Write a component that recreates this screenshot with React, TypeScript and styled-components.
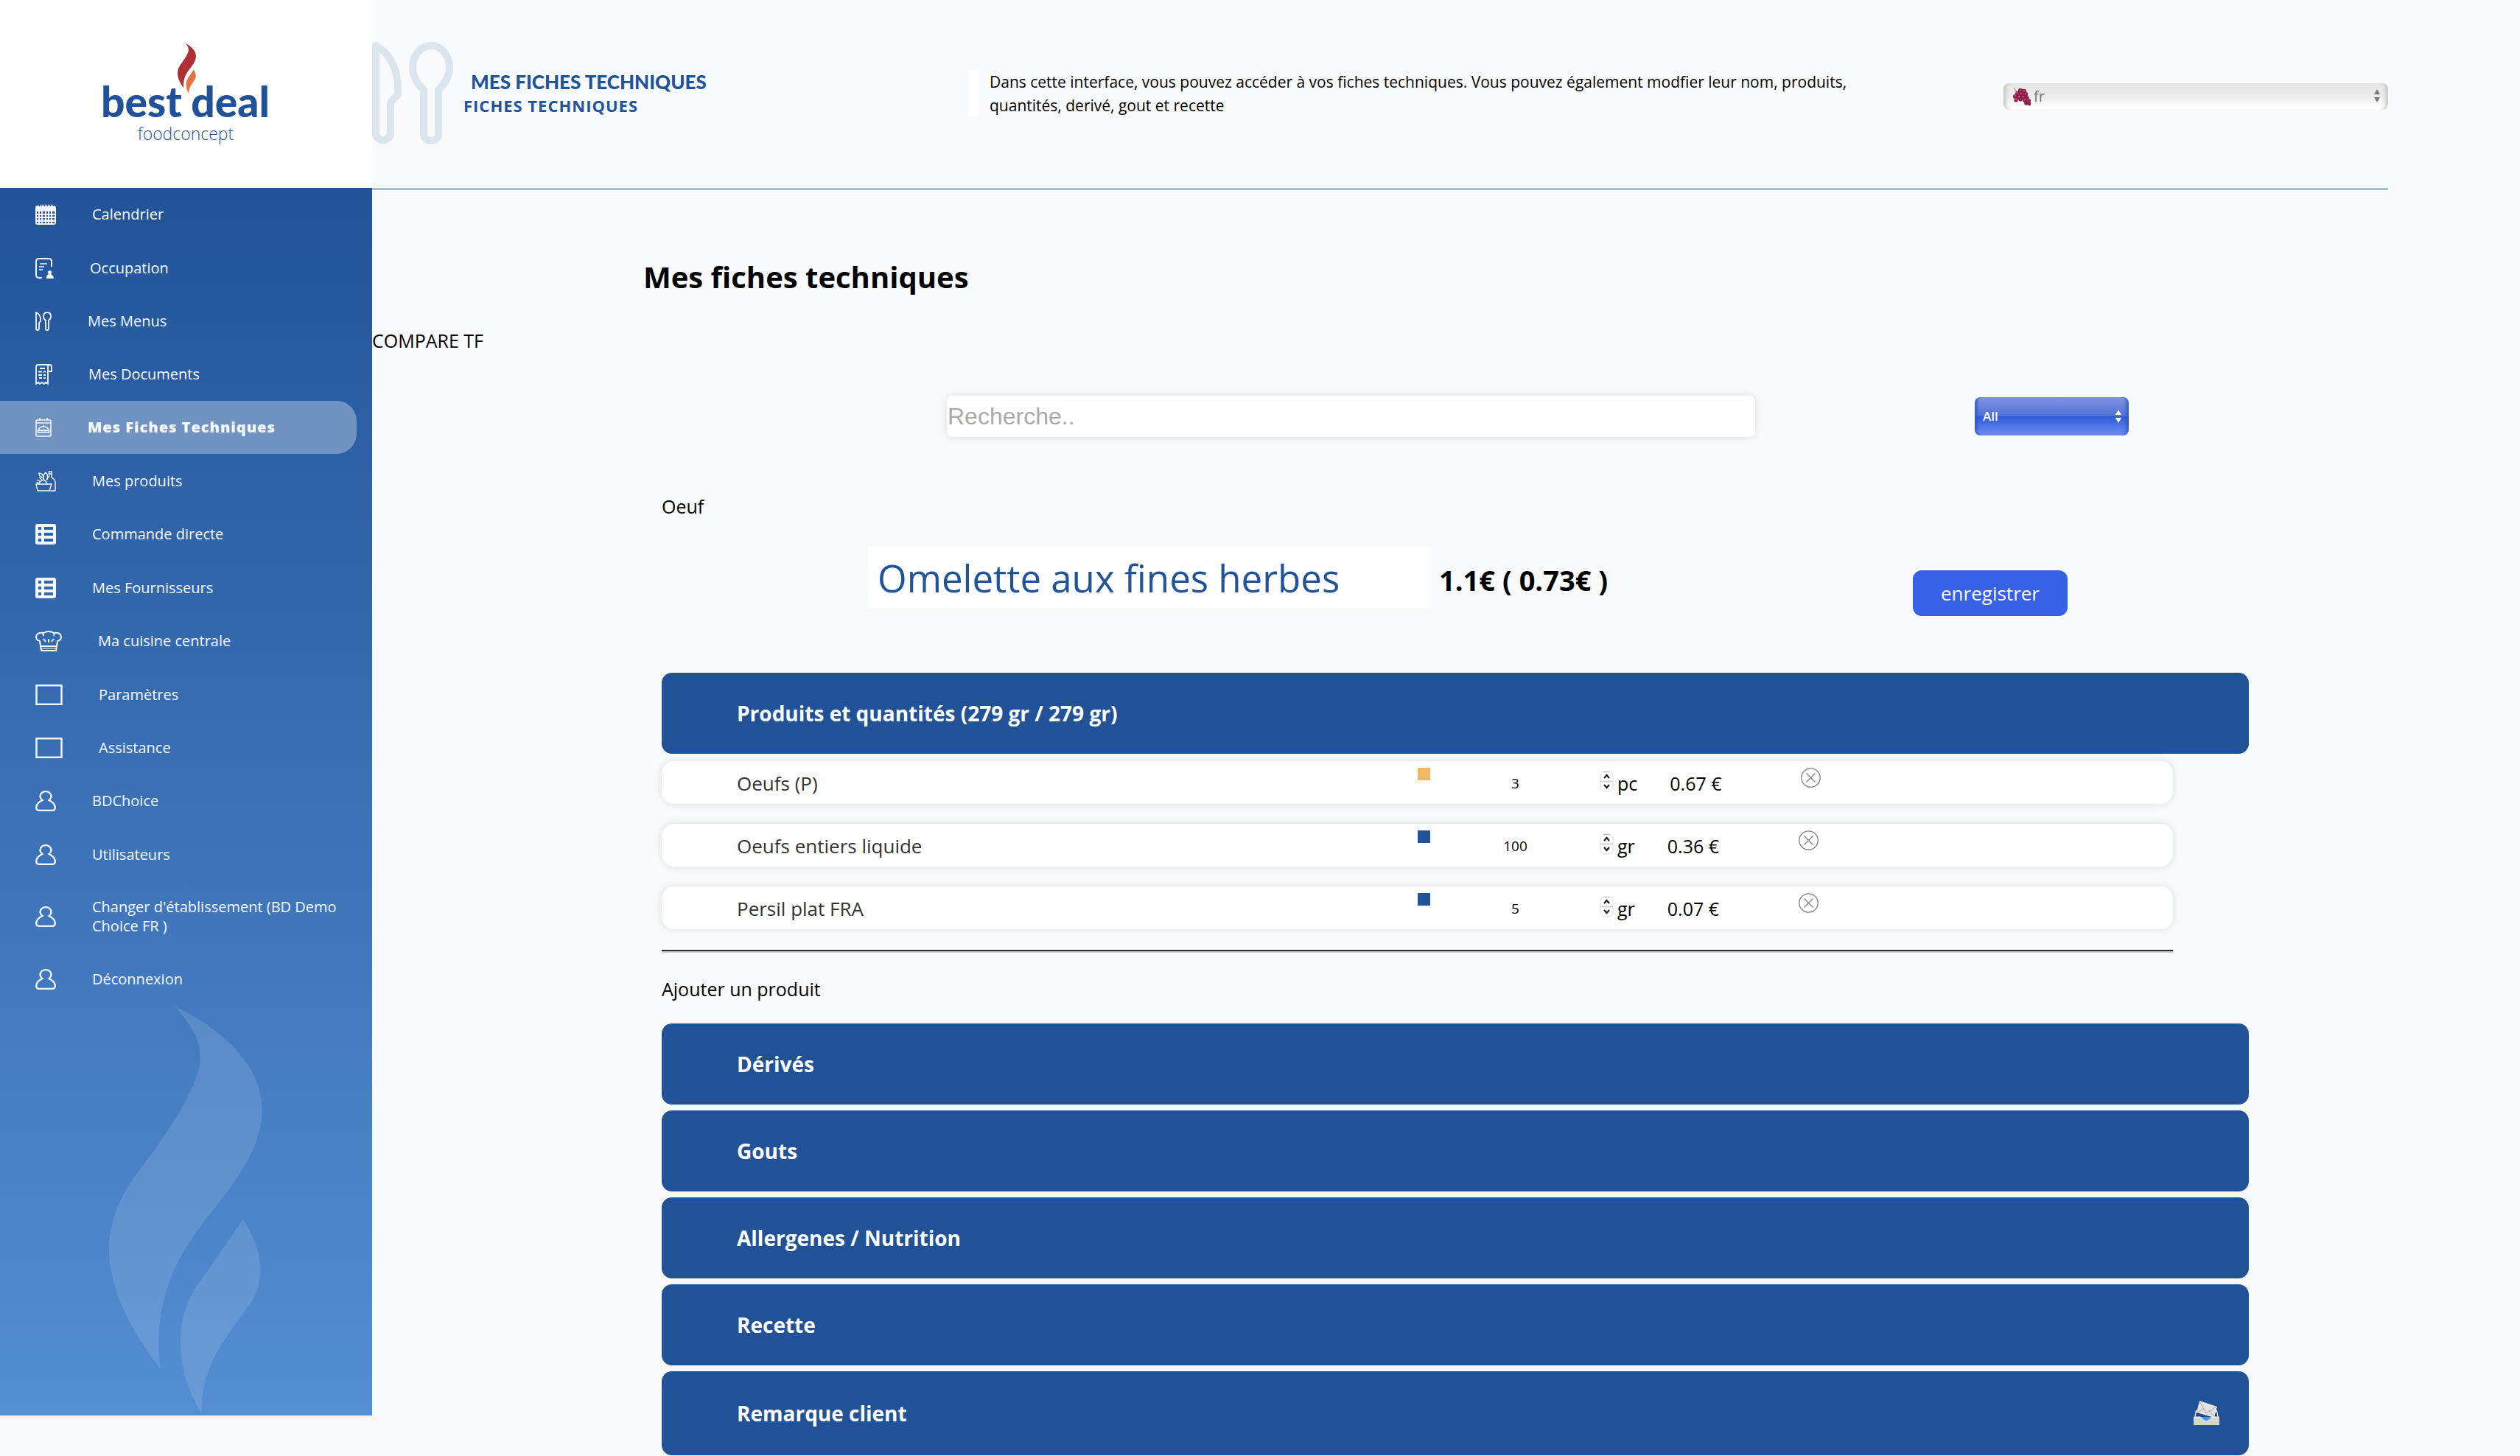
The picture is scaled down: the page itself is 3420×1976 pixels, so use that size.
import React from "react";
import styled, { createGlobalStyle } from "styled-components";

const blue = "#215297";
const bodyFont = `"Open Sans", "Noto Sans", sans-serif`;

const GlobalStyle = createGlobalStyle`
  *, *::before, *::after { box-sizing: border-box; }
  body { margin: 0; background: #f8fafc; color: #000; font-family: ${bodyFont}; font-size: 25px; line-height: 32px; font-weight: 400; }
  h1, h2, h3, p, ul { margin: 0; padding: 0; }
  ul { list-style: none; }
  button, input, select { font: inherit; }
  svg { display: block; flex: none; }
`;

const Page = styled.div`
  display: flex;
  align-items: flex-start;
  overflow: hidden;
`;

/* ---------- sidebar ---------- */

const Sidebar = styled.aside`
  flex: 0 0 505px;
`;

const Brand = styled.a`
  display: flex;
  justify-content: center;
  height: 255px;
  padding-top: 58px;
  background: #fff;
`;

const SideBody = styled.div`
  display: flex;
  flex-direction: column;
  padding-bottom: 2px;
  background: linear-gradient(180deg, #225399 0%, #548ed2 100%);
`;

const Nav = styled.nav`
  display: flex;
  flex-direction: column;
  min-height: 1110px;
`;

const NavItem = styled.a<{ $active?: boolean }>`
  display: flex;
  flex: 1 1 auto;
  align-items: center;
  gap: 49px;
  min-height: 72px;
  margin-right: 21px;
  padding: 22px 20px 22px 48px;
  border-radius: 0 27px 27px 0;
  background: ${(p) => (p.$active ? "rgba(255, 255, 255, 0.33)" : "transparent")};
  color: #f6faff;
  font-size: 20px;
  line-height: 26px;
  font-weight: ${(p) => (p.$active ? 800 : 400)};
  letter-spacing: ${(p) => (p.$active ? "1px" : "normal")};
  text-decoration: none;
`;

const FlameHolder = styled.div`
  padding: 1px 0 0 148px;
`;

/* ---------- main area ---------- */

const Main = styled.main`
  width: 80vw;
  min-width: 0;
`;

const Header = styled.header`
  display: flex;
  height: 258px;
  border-bottom: 3px solid #a9bdd0;
`;

const HeaderTitles = styled.div`
  display: flex;
  flex-direction: column;
  width: 700px;
  padding: 95px 0 0 14px;
  color: #21539a;
`;

const HeaderTitle = styled.h2`
  padding-left: 10px;
  font-family: Lato, sans-serif;
  font-size: 26px;
  line-height: 32px;
  font-weight: 900;
`;

const HeaderSub = styled.p`
  font-size: 22px;
  line-height: 32px;
  font-weight: 700;
  letter-spacing: 1px;
`;

const HeaderMark = styled.div`
  width: 110px;
  padding-top: 57px;
`;

const Intro = styled.p`
  width: 1220px;
  height: 64px;
  margin-top: 95px;
  padding-left: 15px;
  border-left: 13px solid #fff;
  font-size: 21px;
`;

const LangBox = styled.div`
  position: relative;
  width: 522px;
  height: 36px;
  margin: 112px 0 0 auto;
`;

const LangSelect = styled.select`
  width: 100%;
  height: 36px;
  padding: 0 30px 0 41px;
  border: 0;
  border-radius: 8px;
  appearance: none;
  background: linear-gradient(180deg, #e6e6e6 0%, #ececec 50%, #ffffff 90%);
  box-shadow: inset 7px 0 5px -4px #c4c4c4, inset -7px 0 5px -4px #c4c4c4;
  color: #777;
  font-size: 20px;
`;

const OnControl = styled.span<{ $left?: number; $right?: number; $top: number }>`
  position: absolute;
  top: ${(p) => p.$top}px;
  left: ${(p) => (p.$left === undefined ? "auto" : `${p.$left}px`)};
  right: ${(p) => (p.$right === undefined ? "auto" : `${p.$right}px`)};
  pointer-events: none;
`;

const PageTitle = styled.h1`
  margin: 94px 0 0 368px;
  font-size: 40px;
  line-height: 48px;
  font-weight: 700;
`;

const Compare = styled.p`
  margin-top: 46px;
`;

const Filters = styled.form`
  display: flex;
  align-items: center;
  gap: 298px;
  margin-top: 59px;
  padding: 0 352px 0 780px;
`;

const Search = styled.input`
  flex: 1;
  min-width: 0;
  height: 56px;
  padding: 0 1px;
  border: 0;
  border-radius: 8px;
  background: #fff;
  box-shadow: 0 0 12px rgba(0, 0, 0, 0.12);
  font-family: "Liberation Sans", Arial, sans-serif;
  font-size: 32px;
  font-weight: 400;

  &::placeholder {
    color: #a9a9a9;
    opacity: 1;
  }
`;

const KindBox = styled.div`
  position: relative;
  width: 209px;
`;

const KindSelect = styled.select`
  display: block;
  width: 100%;
  height: 52px;
  padding: 0 30px 0 11px;
  border: 0;
  border-radius: 8px;
  appearance: none;
  background: linear-gradient(180deg, #8197dc 0%, #4f70d9 50%, #2f59d8 50%, #6f8ef0 100%);
  box-shadow: inset 7px 0 3px -3px rgba(40, 80, 205, 0.6), inset -7px 0 3px -3px rgba(40, 80, 205, 0.6);
  color: #fff;
  font-size: 17px;
  font-weight: 600;
`;

const Sheet = styled.section`
  margin: 78px 189px 0 393px;
`;

const SheetHead = styled.div`
  display: flex;
  align-items: flex-start;
  margin-top: 38px;
  padding: 0 246px 0 280px;
`;

const NameInput = styled.input`
  width: 764px;
  height: 85px;
  padding: 0 13px;
  border: 0;
  background: #fff;
  color: #21539a;
  font-size: 51px;
`;

const Price = styled.strong`
  padding: 22px 0 0 11px;
  font-size: 38px;
  line-height: 48px;
  font-weight: 700;
`;

const Save = styled.button`
  width: 210px;
  height: 62px;
  margin: 33px 0 0 auto;
  border: 0;
  border-radius: 12px;
  background: #3761e6;
  color: #fff;
  font-size: 26px;
`;

const Panel = styled.button<{ $first?: boolean }>`
  display: flex;
  align-items: center;
  justify-content: space-between;
  width: 100%;
  min-height: 110px;
  margin-top: ${(p) => (p.$first ? "77px" : "0")};
  padding: 40px 40px 40px 102px;
  border: 0;
  border-radius: 14px;
  background: ${blue};
  color: #fff;
  font-size: 28px;
  line-height: 30px;
  font-weight: 700;
  text-align: left;
`;

const Panels = styled.div`
  display: flex;
  flex-direction: column;
  gap: 8px;
  margin-top: 31px;
`;

const Products = styled.ul`
  display: flex;
  flex-direction: column;
  gap: 27px;
  margin: 10px 103px 0 0;
`;

const Product = styled.li`
  display: flex;
  align-items: center;
  height: 58px;
  padding: 9px 0 7px 102px;
  border-radius: 17px;
  background: #fff;
  box-shadow: 0 0 12px rgba(0, 0, 0, 0.12);
`;

const ProductName = styled.span`
  flex: 0 0 924px;
  color: #333;
  font-size: 26px;
`;

const Swatch = styled.span<{ $color: string }>`
  align-self: flex-start;
  width: 17px;
  height: 17px;
  background: ${(p) => p.$color};
`;

const Quantity = styled.input`
  width: 217px;
  height: 32px;
  margin: 0 6px 0 7px;
  padding: 0;
  border: 0;
  background: transparent;
  font-size: 19px;
  text-align: center;
  appearance: textfield;

  &::-webkit-inner-spin-button {
    display: none;
  }
`;

const Stepper = styled.span`
  align-self: flex-start;
  margin: 4px 5px 0 0;
`;

const Cost = styled.span`
  width: 178px;
  margin-left: 44px;
`;

const Remove = styled.button`
  align-self: flex-start;
  padding: 0;
  border: 0;
  background: none;
`;

const Rule = styled.hr`
  height: 4px;
  margin: 28px 103px 33px 0;
  border: 0;
  border-top: 2px solid #2c2c2c;
  border-bottom: 2px solid #cfcfd0;
`;

/* ---------- drawings ---------- */

const FLAME_A =
  "M713 64C860 120 1068 240 1068 410C1068 520 985 625 880 733C790 830 646 960 646 1195C646 1225 649 1250 653 1275C540 1160 444 1010 444 880C444 740 530 655 610 565C730 430 816 310 816 232C816 170 770 120 713 64Z";
const FLAME_B =
  "M991 776C1030 825 1061 885 1061 948C1061 1020 1020 1060 970 1115C900 1195 815 1290 822 1427C770 1360 735 1275 735 1185C735 1060 800 1000 870 920Z";

const Flame = () => (
  <svg width="208" height="553" viewBox="444 64 625 1364" preserveAspectRatio="none" fill="rgba(255,255,255,0.12)" aria-hidden>
    <path d={FLAME_A} />
    <path d={FLAME_B} />
  </svg>
);

const Logo = () => (
  <svg width="234" height="140" viewBox="136 58 234 140" role="img" aria-label="best deal foodconcept">
    <svg x="241" y="59" width="25" height="68" viewBox="444 64 625 1364" preserveAspectRatio="none">
      <path d={FLAME_A} fill="#b02f35" />
      <path d={FLAME_B} fill="#e4723a" />
    </svg>
    <g fill={blue} fontFamily="Lato, sans-serif">
      <text x="137" y="159" fontSize="57" fontWeight="900">best</text>
      <text x="366" y="159" fontSize="57" fontWeight="900" textAnchor="end">deal</text>
      <text x="252" y="190" fontSize="23" fontWeight="300" fontFamily="Open Sans, sans-serif" textAnchor="middle">foodconcept</text>
    </g>
  </svg>
);

const Cutlery = () => (
  <svg width="110" height="140" viewBox="505 57 110 140" fill="none" stroke="#dbe5ed" strokeWidth="10" aria-hidden>
    <path d="M510 62V181a10 9 0 0 0 20 0V139L540 128C541 100 533 75 510 62Z" strokeLinejoin="round" />
    <path d="M575 122C564 112 560 100 560 92C560 74 572 62 585 62S610 74 610 92C610 100 606 112 595 122V182a10 9 0 0 1-20 0Z" />
  </svg>
);

const Grapes = () => (
  <svg width="26" height="26" viewBox="0 0 26 26" aria-hidden>
    <path d="M2 1C3 5 5 7 8 8L9 6C6 6 4 4 3 1Z" fill="#86b24a" />
    <g fill="#8d2149">
      <circle cx="11" cy="5" r="3.200" /><circle cx="16" cy="6" r="3.200" /><circle cx="7" cy="9" r="3" />
      <circle cx="12" cy="10" r="3.500" /><circle cx="18" cy="10" r="3.200" /><circle cx="4" cy="13" r="3" />
      <circle cx="9" cy="14" r="3.500" /><circle cx="15" cy="14" r="3.500" /><circle cx="20" cy="15" r="2.800" />
      <circle cx="5" cy="18" r="2.600" /><circle cx="11" cy="17" r="2.600" /><circle cx="17" cy="18" r="3" />
      <circle cx="22" cy="19" r="3" /><circle cx="19" cy="22" r="2.800" /><circle cx="23" cy="23" r="2.400" />
    </g>
    <g fill="#c04a7e">
      <circle cx="11" cy="4" r="1.300" /><circle cx="16" cy="5" r="1.300" /><circle cx="7" cy="8" r="1.200" />
      <circle cx="12" cy="9" r="1.300" /><circle cx="18" cy="9" r="1.200" /><circle cx="4" cy="12" r="1.200" />
      <circle cx="9" cy="13" r="1.300" /><circle cx="15" cy="13" r="1.300" /><circle cx="5" cy="17" r="1" />
      <circle cx="17" cy="17" r="1.200" /><circle cx="21" cy="18" r="1.100" />
    </g>
  </svg>
);

const Arrows = ({ color }: { color: string }) => (
  <svg width="10" height="18" viewBox="0 0 10 18" fill={color} aria-hidden>
    <path d="M5 0L9 7H1Z" />
    <path d="M5 18L9 11H1Z" />
  </svg>
);

const Mailbox = () => (
  <svg width="35" height="34" viewBox="0 0 35 34" aria-hidden>
    <path d="M3 13L1 23V33H34V23L32 13" fill="#f2f2f0" />
    <path d="M4 15H31L33 24H2Z" fill="#1c4a85" />
    <path d="M10 22H25L22 28H13Z" fill="#4b94ea" />
    <path d="M8 0L32 8L28 23L4 16Z" fill="#e2e2e4" />
    <path d="M8 1L17 17L31 8M4 16L14 11M28 22L21 13" fill="none" stroke="#a4a4a8" strokeWidth="1" />
    <path d="M0 22H9C11 22 12 27 17 28C22 27 23 22 26 22H35V33H0Z" fill="#d6d5ce" />
    <path d="M1 22H9C11 22 12 27 17 28C22 27 23 22 26 22H34" fill="none" stroke="#fff" strokeWidth="1" />
  </svg>
);

const Spinner = () => (
  <svg width="19" height="29" viewBox="0 0 19 29" fill="none" aria-hidden>
    <rect x="1" y="1" width="17" height="27" rx="6" fill="#fff" stroke="#dcdcdc" />
    <path d="M5 1.500H14" stroke="#bdbdbd" />
    <path d="M1 14.500H18" stroke="#d6d6d6" strokeWidth="2" />
    <path d="M6 10L9.500 6L13 10M6 19L9.500 23L13 19" stroke="#222" strokeWidth="2.200" />
  </svg>
);

const Cross = () => (
  <svg width="27" height="27" viewBox="0 0 27 27" fill="none" stroke="#808080" strokeWidth="1.300" aria-hidden>
    <circle cx="13.500" cy="13.500" r="12.700" />
    <path d="M7.500 7.500L19.500 19.500M19.500 7.500L7.500 19.500" />
  </svg>
);

const ink = "#f4f8fe";

const icons = {
  calendar: (
    <svg width="28" height="28" viewBox="0 0 28 28" aria-hidden>
      <path
        fillRule="evenodd"
        fill={ink}
        d="M3 2H5L6 4L7 0L8 3H9L10 0L12 3H13L14 0L16 3H17L18 0L20 3H21L22 0L24 3L26 2Q28 3 28 5V25Q28 28 25 28H3Q0 28 0 25V5Q0 2 3 2ZM2 10V13H4V10ZM6 10V13H8V10ZM10 10V13H13V10ZM15 10V13H17V10ZM19 10V13H21V10ZM23 10V13H26V10ZM2 15V17H4V15ZM6 15V17H8V15ZM10 15V17H13V15ZM15 15V17H17V15ZM19 15V17H21V15ZM23 15V17H26V15ZM2 19V21H4V19ZM6 19V21H8V19ZM10 19V21H13V19ZM15 19V21H17V19ZM19 19V21H21V19ZM23 19V21H26V19ZM2 24V26H4V24ZM6 24V26H8V24ZM10 24V26H13V24ZM15 24V26H17V24ZM19 24V26H21V24ZM23 24V26H26V24Z"
      />
    </svg>
  ),
  occupation: (
    <svg width="25" height="28" viewBox="0 0 25 28" fill="none" stroke={ink} strokeWidth="2" aria-hidden>
      <path d="M22 12V5Q22 1 18 1H5Q1 1 1 5V23Q1 27 5 27H9" />
      <path d="M6 8H16M5 12H12M5 16H10" strokeWidth="1.600" />
      <path d="M15 28Q14 24 18 22Q16 20 17 18.500Q19.500 16 22 18.500Q23 20 21 22Q25 24 25 28Z" fill={ink} stroke="none" />
    </svg>
  ),
  cutlery: (
    <svg width="22" height="26" viewBox="0 0 22 26" fill="none" stroke={ink} strokeWidth="1.800" aria-hidden>
      <path d="M1 1V23a2 2 0 0 0 4 0V15L7 13Q8 4 1 1Z" />
      <path d="M14 12Q11 10 11 6.500Q11 1 16 1T21 6.500Q21 10 18 12V23a2 2 0 0 1-4 0Z" />
    </svg>
  ),
  receipt: (
    <svg width="23" height="28" viewBox="0 0 23 28" fill="none" stroke={ink} strokeWidth="1.800" aria-hidden>
      <path d="M17 4V27L14 25L12 27L9 25L6 27L4 25L1 27V4Q1 1 4 1H19.500Q22 1 22 4V10H17" />
      <path d="M17 4Q17 1 19.500 1" />
      <path d="M6 6H13M4 10.500H9M11 10.500H14M4 15H9M11 15H14M5 19H9M11 19H14" />
    </svg>
  ),
  sheet: (
    <svg width="22" height="26" viewBox="0 0 22 26" fill="none" stroke={ink} strokeWidth="1.500" aria-hidden>
      <rect x="1" y="3" width="20" height="22" rx="2" />
      <path d="M1 7H21M6 0V4M16 0V4" />
      <path d="M4 17Q5 12 11 12T18 17ZM3.500 20H18.500V17.500H3.500ZM11 12V10" />
    </svg>
  ),
  produce: (
    <svg width="28" height="28" viewBox="0 0 28 28" fill="none" stroke={ink} strokeWidth="1.400" aria-hidden>
      <path d="M1 18H22L19 27H3Z" />
      <path d="M19 27H27V15Q27 12 22 9V1H18.500V8Q16 10 15 13M18 4H22" />
      <path d="M4 18L7 14L12 12L16 17M5 3Q10 3 11 9Q5 9 5 3ZM11 12Q10 6 14 2Q18 6 16 12M2 12L7 15M1 15L4 17M5 9L9 12" />
    </svg>
  ),
  list: (
    <svg width="28" height="28" viewBox="0 0 28 28" aria-hidden>
      <path
        fillRule="evenodd"
        fill={ink}
        d="M3 0H25Q28 0 28 3V25Q28 28 25 28H3Q0 28 0 25V3Q0 0 3 0ZM4 4V8H8V4ZM12 4V8H24V4ZM4 12V16H8V12ZM12 12V16H24V12ZM4 20V24H8V20ZM12 20V24H24V20Z"
      />
    </svg>
  ),
  chef: (
    <svg width="36" height="28" viewBox="0 0 36 28" fill="none" stroke={ink} strokeWidth="2" aria-hidden>
      <path d="M8 27L6 14Q1 13 1 8Q2 2 11 3Q14 1 18 1T25 3Q34 2 35 8Q35 13 30 14L28 27ZM7 21H29" />
      <path d="M11 3Q10 5 11 7M25 3Q26 5 25 7M11 11L14 15M18 11V16M25 11L22 15" />
      <path d="M8 24H28" strokeWidth="1" />
    </svg>
  ),
  frame: (
    <svg width="37" height="28" viewBox="0 0 37 28" fill="none" stroke={ink} strokeWidth="2.400" aria-hidden>
      <rect x="1.500" y="1.200" width="34" height="25.600" />
    </svg>
  ),
  person: (
    <svg width="28" height="28" viewBox="0 0 28 28" fill="none" stroke={ink} strokeWidth="2.300" aria-hidden>
      <path d="M9.500 13Q6 10 6.500 7Q8 1.200 14 1.200T21.500 7Q22 10 18.500 13Q26.800 17 26.800 23Q26.800 26.800 23 26.800H5Q1.200 26.800 1.200 23Q1.200 17 9.500 13Z" />
    </svg>
  ),
};

/* ---------- data ---------- */

const menu: { label: string; icon: keyof typeof icons; active?: boolean }[] = [
  { label: "Calendrier", icon: "calendar" },
  { label: "Occupation", icon: "occupation" },
  { label: "Mes Menus", icon: "cutlery" },
  { label: "Mes Documents", icon: "receipt" },
  { label: "Mes Fiches Techniques", icon: "sheet", active: true },
  { label: "Mes produits", icon: "produce" },
  { label: "Commande directe", icon: "list" },
  { label: "Mes Fournisseurs", icon: "list" },
  { label: "Ma cuisine centrale", icon: "chef" },
  { label: "Paramètres", icon: "frame" },
  { label: "Assistance", icon: "frame" },
  { label: "BDChoice", icon: "person" },
  { label: "Utilisateurs", icon: "person" },
  { label: "Changer d'établissement (BD Demo Choice FR )", icon: "person" },
  { label: "Déconnexion", icon: "person" },
];

const products = [
  { name: "Oeufs (P)", color: "#f3b76a", quantity: 3, unit: "pc", cost: "0.67 €" },
  { name: "Oeufs entiers liquide", color: blue, quantity: 100, unit: "gr", cost: "0.36 €" },
  { name: "Persil plat FRA", color: blue, quantity: 5, unit: "gr", cost: "0.07 €" },
];

export default function App() {
  return (
    <>
      <GlobalStyle />
      <Page>
        <Sidebar>
          <Brand href="#">
            <Logo />
          </Brand>
          <SideBody>
            <Nav>
              {menu.map((item) => (
                <NavItem key={item.label} href="#" $active={item.active}>
                  {icons[item.icon]}
                  <span>{item.label}</span>
                </NavItem>
              ))}
            </Nav>
            <FlameHolder>
              <Flame />
            </FlameHolder>
          </SideBody>
        </Sidebar>

        <Main>
          <Header>
            <HeaderMark>
              <Cutlery />
            </HeaderMark>
            <HeaderTitles>
              <HeaderTitle>MES FICHES TECHNIQUES</HeaderTitle>
              <HeaderSub>FICHES TECHNIQUES</HeaderSub>
            </HeaderTitles>
            <Intro>
              Dans cette interface, vous pouvez accéder à vos fiches techniques. Vous pouvez également modfier leur nom, produits, quantités, derivé, gout et recette
            </Intro>
            <LangBox>
              <LangSelect aria-label="Langue" defaultValue="fr">
                <option value="fr">fr</option>
              </LangSelect>
              <OnControl $left={12} $top={6}>
                <Grapes />
              </OnControl>
              <OnControl $right={10} $top={9}>
                <Arrows color="#777" />
              </OnControl>
            </LangBox>
          </Header>

          <PageTitle>Mes fiches techniques</PageTitle>
          <Compare>COMPARE TF</Compare>

          <Filters>
            <Search type="text" aria-label="Recherche" placeholder="Recherche.." />
            <KindBox>
              <KindSelect aria-label="Type" defaultValue="All">
                <option>All</option>
              </KindSelect>
              <OnControl $right={9} $top={17}>
                <Arrows color="#fff" />
              </OnControl>
            </KindBox>
          </Filters>

          <Sheet>
            <p>Oeuf</p>
            <SheetHead>
              <NameInput type="text" aria-label="Nom de la fiche" defaultValue="Omelette aux fines herbes" />
              <Price>1.1€ ( 0.73€ )</Price>
              <Save type="button">enregistrer</Save>
            </SheetHead>

            <Panel $first type="button">
              Produits et quantités (279 gr / 279 gr)
            </Panel>
            <Products>
              {products.map((p) => (
                <Product key={p.name}>
                  <ProductName>{p.name}</ProductName>
                  <Swatch $color={p.color} />
                  <Quantity type="number" aria-label={`Quantité ${p.name}`} defaultValue={p.quantity} />
                  <Stepper>
                    <Spinner />
                  </Stepper>
                  <span>{p.unit}</span>
                  <Cost>{p.cost}</Cost>
                  <Remove type="button" aria-label={`Supprimer ${p.name}`}>
                    <Cross />
                  </Remove>
                </Product>
              ))}
            </Products>
            <Rule />
            <p>Ajouter un produit</p>
            <Panels>
              <Panel type="button">Dérivés</Panel>
              <Panel type="button">Gouts</Panel>
              <Panel type="button">Allergenes / Nutrition</Panel>
              <Panel type="button">Recette</Panel>
              <Panel type="button">
                Remarque client
                <Mailbox />
              </Panel>
            </Panels>
          </Sheet>
        </Main>
      </Page>
    </>
  );
}
